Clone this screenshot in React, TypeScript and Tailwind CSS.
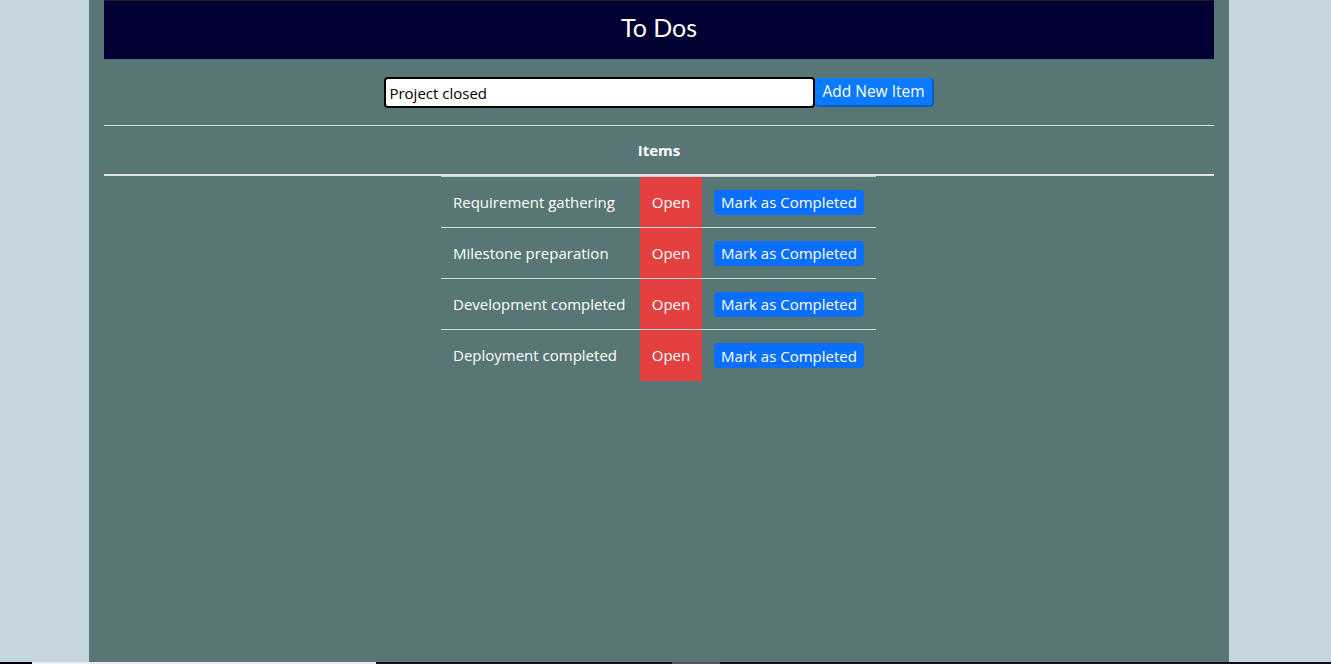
import React from "react";

const items = [
  "Requirement gathering",
  "Milestone preparation",
  "Development completed",
  "Deployment completed",
];

export default function App() {
  return (
    <div className="h-[664px] w-full overflow-hidden bg-[#c5d6de] flex flex-col">
      <div className="flex-1 flex pl-[89px]">
        <div
          className="w-[1140px] bg-[#577674] px-[15px] flex flex-col"
          style={{ fontFamily: '"Open Sans", "Noto Sans", sans-serif' }}
        >
          <div className="h-[59px] bg-[#000033] border-t border-[#1c1c2c] flex items-center justify-center">
            <h1
              className="text-white text-[25px] leading-none mb-[6px]"
              style={{ fontFamily: "Lato, sans-serif" }}
            >
              To Dos
            </h1>
          </div>
          <div className="flex justify-center mt-[18px]">
            <input
              className="w-[431px] h-[31px] border-2 border-black rounded-[4px] bg-white px-[3px] text-[15px] text-black outline-none"
              defaultValue="Project closed"
            />
            <button className="h-[29px] mt-[1px] bg-[#0a7bff] text-white text-[15.5px] px-[7px] rounded-[4px] border-b-2 border-r-2 border-[#0a5fc0]">
              Add New Item
            </button>
          </div>
          <div className="mt-[17px] h-[1px] bg-[#d8dedd]" />
          <div className="h-[48px] flex items-center justify-center text-white font-bold text-[15px]">
            Items
          </div>
          <div className="h-[2px] bg-[#dfe3e6]" />
          <div className="flex justify-center pr-[1px]">
            <table className="w-[435px] table-fixed border-collapse border-t border-[#c9d3d2] text-white text-[15px]">
              <colgroup>
                <col className="w-[199px]" />
                <col className="w-[62px]" />
                <col className="w-[174px]" />
              </colgroup>
              <tbody>
                {items.map((it, i) => (
                  <tr
                    key={it}
                    className={i < items.length - 1 ? "border-b border-[#d5dcdb]" : ""}
                  >
                    <td className="h-[51px] pl-[12px] pr-0 whitespace-nowrap">{it}</td>
                    <td className="h-[51px] px-0 bg-[#e54040] text-center">Open</td>
                    <td className="h-[51px] px-[12px]">
                      <button className="h-[25px] w-[150px] mt-[1px] bg-[#0b6ffd] text-white text-[15px] rounded-[4px]">
                        Mark as Completed
                      </button>
                    </td>
                  </tr>
                ))}
              </tbody>
            </table>
          </div>
        </div>
      </div>
      <div className="h-[2px] flex">
        <div className="w-[32px] bg-black" />
        <div className="w-[344px] bg-[#e8eceb]" />
        <div className="w-[296px] bg-[#111]" />
        <div className="w-[48px] bg-[#555]" />
        <div className="flex-1 bg-[#111]" />
      </div>
    </div>
  );
}
